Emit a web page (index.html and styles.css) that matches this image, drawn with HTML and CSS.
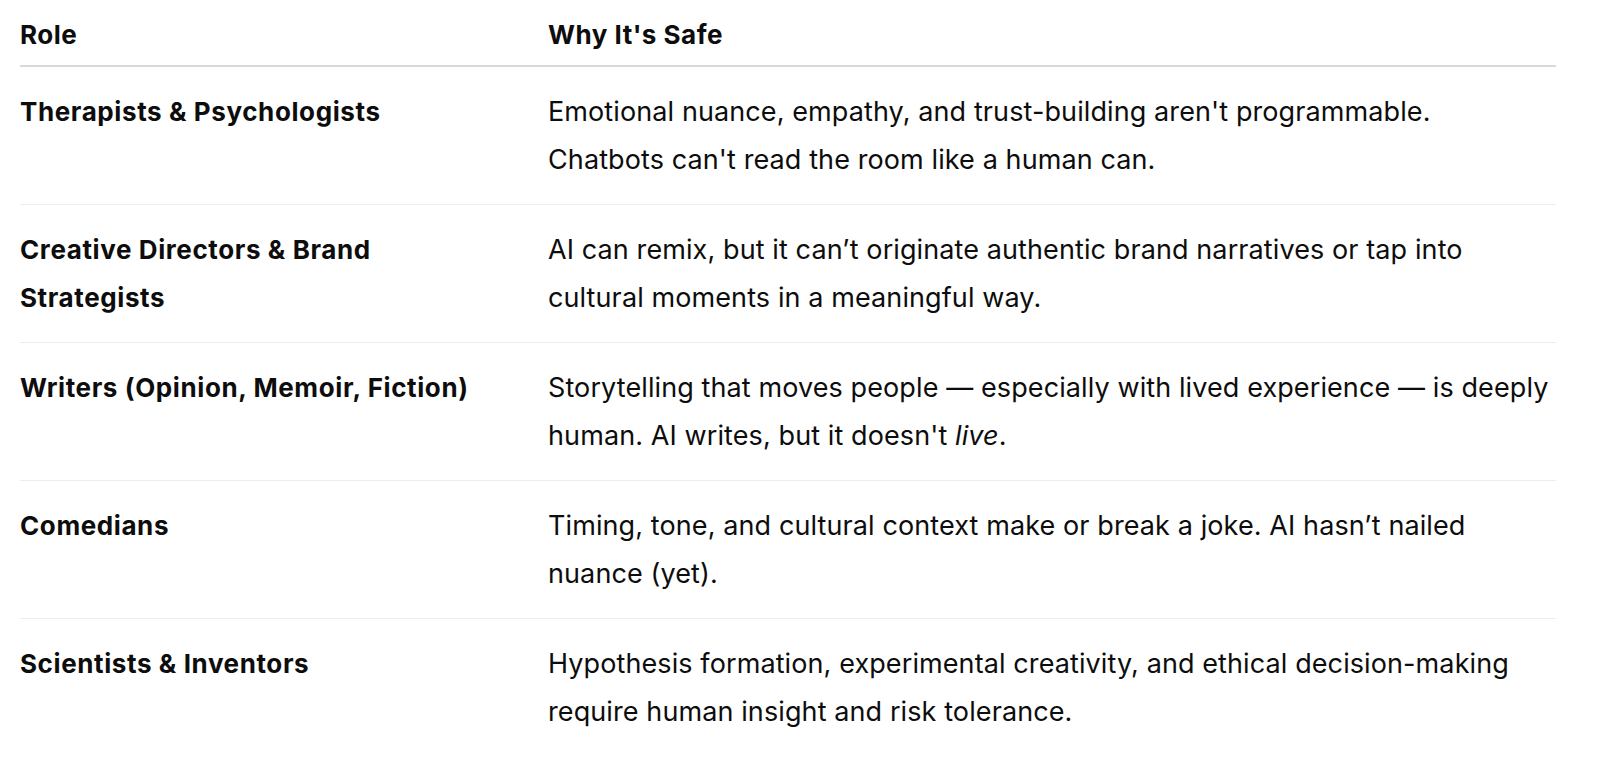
FILE: index.html
```html
<!DOCTYPE html>
<html lang="en">
<head>
<meta charset="utf-8">
<title>Jobs AI can't replace</title>
<link rel="stylesheet" href="styles.css">
</head>
<body>
<div class="page">
  <table class="roles">
    <thead>
      <tr>
        <th class="col-role">Role</th>
        <th class="col-why">Why It's Safe</th>
      </tr>
    </thead>
    <tbody>
      <tr>
        <td class="col-role">Therapists &amp; Psychologists</td>
        <td class="col-why">Emotional nuance, empathy, and trust-building aren't programmable.<br>Chatbots can't read the room like a human can.</td>
      </tr>
      <tr>
        <td class="col-role">Creative Directors &amp; Brand Strategists</td>
        <td class="col-why">AI can remix, but it can’t originate authentic brand narratives or tap into cultural moments in a meaningful way.</td>
      </tr>
      <tr>
        <td class="col-role">Writers (Opinion, Memoir, Fiction)</td>
        <td class="col-why">Storytelling that moves people — especially with lived experience — is deeply human. AI writes, but it doesn't <em>live</em>.</td>
      </tr>
      <tr>
        <td class="col-role">Comedians</td>
        <td class="col-why">Timing, tone, and cultural context make or break a joke. AI hasn’t nailed nuance (yet).</td>
      </tr>
      <tr>
        <td class="col-role">Scientists &amp; Inventors</td>
        <td class="col-why">Hypothesis formation, experimental creativity, and ethical decision-making require human insight and risk tolerance.</td>
      </tr>
    </tbody>
  </table>
</div>
</body>
</html>
```

FILE: styles.css
```css
html, body {
  margin: 0;
  padding: 0;
  background: #ffffff;
}

body {
  font-family: Inter, "Noto Sans", "Liberation Sans", sans-serif;
  color: #0d0d0d;
  font-size: 27px;
  line-height: 48px;
  letter-spacing: 0.1px;
}

.page {
  padding: 11px 48px 0 20px;
}

.roles {
  width: 100%;
  border-collapse: collapse;
  table-layout: fixed;
}

.roles th,
.roles td {
  text-align: left;
  vertical-align: top;
  padding: 0;
}

.roles .col-role {
  width: 528px;
  padding-right: 38px;
  box-sizing: border-box;
}

.roles th {
  font-size: 26px;
  font-weight: 700;
  letter-spacing: 0.5px;
  padding-bottom: 6px;
  border-bottom: 2px solid #d9d9d9;
}

.roles td {
  padding-top: 21px;
  padding-bottom: 20px;
  border-bottom: 1px solid #ededed;
}

.roles td.col-role {
  font-size: 26px;
  font-weight: 700;
  letter-spacing: 0.6px;
}

.roles tbody tr:last-child td {
  border-bottom: none;
}

.roles em {
  font-style: italic;
}
```
